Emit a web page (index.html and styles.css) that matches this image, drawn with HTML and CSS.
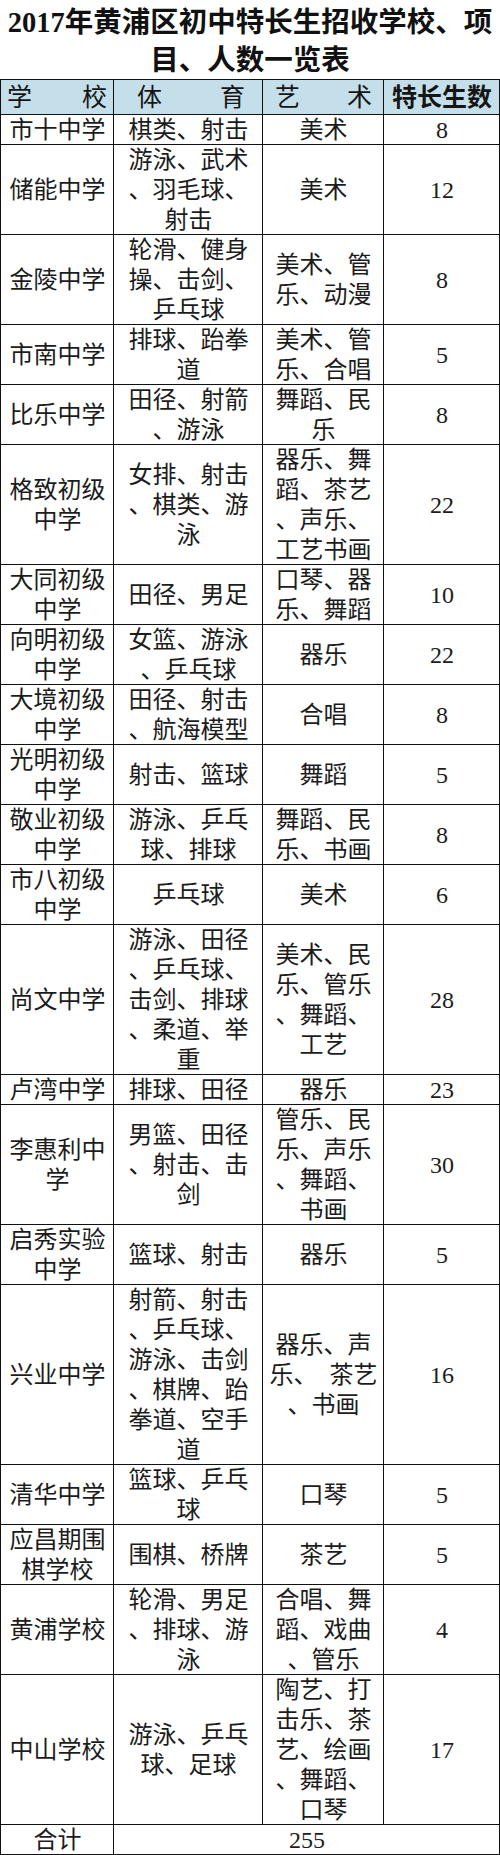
FILE: index.html
```html
<!DOCTYPE html>
<html lang="zh-CN">
<head>
<meta charset="utf-8">
<title>2017年黄浦区初中特长生招收学校、项目、人数一览表</title>
<link rel="stylesheet" href="styles.css">
</head>
<body>
<h1 class="title">2017年黄浦区初中特长生招收学校、项<br>目、人数一览表</h1>
<div class="sheet">
  <div class="cell head spread pad-school"><span>学</span><span>校</span></div>
  <div class="cell head spread pad-sport"><span>体</span><span>育</span></div>
  <div class="cell head spread pad-art"><span>艺</span><span>术</span></div>
  <div class="cell head strong">特长生数</div>

  <div class="cell">市十中学</div>
  <div class="cell">棋类、射击</div>
  <div class="cell">美术</div>
  <div class="cell">8</div>

  <div class="cell">储能中学</div>
  <div class="cell">游泳、武术<br>、羽毛球、<br>射击</div>
  <div class="cell">美术</div>
  <div class="cell">12</div>

  <div class="cell">金陵中学</div>
  <div class="cell">轮滑、健身<br>操、击剑、<br>乒乓球</div>
  <div class="cell">美术、管<br>乐、动漫</div>
  <div class="cell">8</div>

  <div class="cell">市南中学</div>
  <div class="cell">排球、跆拳<br>道</div>
  <div class="cell">美术、管<br>乐、合唱</div>
  <div class="cell">5</div>

  <div class="cell">比乐中学</div>
  <div class="cell">田径、射箭<br>、游泳</div>
  <div class="cell">舞蹈、民<br>乐</div>
  <div class="cell">8</div>

  <div class="cell">格致初级<br>中学</div>
  <div class="cell">女排、射击<br>、棋类、游<br>泳</div>
  <div class="cell">器乐、舞<br>蹈、茶艺<br>、声乐、<br>工艺书画</div>
  <div class="cell">22</div>

  <div class="cell">大同初级<br>中学</div>
  <div class="cell">田径、男足</div>
  <div class="cell">口琴、器<br>乐、舞蹈</div>
  <div class="cell">10</div>

  <div class="cell">向明初级<br>中学</div>
  <div class="cell">女篮、游泳<br>、乒乓球</div>
  <div class="cell">器乐</div>
  <div class="cell">22</div>

  <div class="cell">大境初级<br>中学</div>
  <div class="cell">田径、射击<br>、航海模型</div>
  <div class="cell">合唱</div>
  <div class="cell">8</div>

  <div class="cell">光明初级<br>中学</div>
  <div class="cell">射击、篮球</div>
  <div class="cell">舞蹈</div>
  <div class="cell">5</div>

  <div class="cell">敬业初级<br>中学</div>
  <div class="cell">游泳、乒乓<br>球、排球</div>
  <div class="cell">舞蹈、民<br>乐、书画</div>
  <div class="cell">8</div>

  <div class="cell">市八初级<br>中学</div>
  <div class="cell">乒乓球</div>
  <div class="cell">美术</div>
  <div class="cell">6</div>

  <div class="cell">尚文中学</div>
  <div class="cell">游泳、田径<br>、乒乓球、<br>击剑、排球<br>、柔道、举<br>重</div>
  <div class="cell">美术、民<br>乐、管乐<br>、舞蹈、<br>工艺</div>
  <div class="cell">28</div>

  <div class="cell">卢湾中学</div>
  <div class="cell">排球、田径</div>
  <div class="cell">器乐</div>
  <div class="cell">23</div>

  <div class="cell">李惠利中<br>学</div>
  <div class="cell">男篮、田径<br>、射击、击<br>剑</div>
  <div class="cell">管乐、民<br>乐、声乐<br>、舞蹈、<br>书画</div>
  <div class="cell">30</div>

  <div class="cell">启秀实验<br>中学</div>
  <div class="cell">篮球、射击</div>
  <div class="cell">器乐</div>
  <div class="cell">5</div>

  <div class="cell">兴业中学</div>
  <div class="cell">射箭、射击<br>、乒乓球、<br>游泳、击剑<br>、棋牌、跆<br>拳道、空手<br>道</div>
  <div class="cell">器乐、声<br>乐、&ensp;茶艺<br>、书画</div>
  <div class="cell">16</div>

  <div class="cell">清华中学</div>
  <div class="cell">篮球、乒乓<br>球</div>
  <div class="cell">口琴</div>
  <div class="cell">5</div>

  <div class="cell">应昌期围<br>棋学校</div>
  <div class="cell">围棋、桥牌</div>
  <div class="cell">茶艺</div>
  <div class="cell">5</div>

  <div class="cell">黄浦学校</div>
  <div class="cell">轮滑、男足<br>、排球、游<br>泳</div>
  <div class="cell">合唱、舞<br>蹈、戏曲<br>、管乐</div>
  <div class="cell">4</div>

  <div class="cell">中山学校</div>
  <div class="cell">游泳、乒乓<br>球、足球</div>
  <div class="cell">陶艺、打<br>击乐、茶<br>艺、绘画<br>、舞蹈、<br>口琴</div>
  <div class="cell">17</div>

  <div class="cell">合计</div>
  <div class="cell span3">255</div>
</div>
</body>
</html>
```
FILE: styles.css
```css
html, body {
  margin: 0;
  padding: 0;
  background: #ffffff;
}

body {
  width: 500px;
  font-family: "Liberation Serif", "Noto Sans CJK SC", serif;
  color: #1c1c1c;
}

.title {
  margin: 0;
  box-sizing: border-box;
  height: 79px;
  padding-top: 4px;
  font-size: 28.5px;
  line-height: 38px;
  font-weight: bold;
  text-align: center;
  white-space: nowrap;
  color: #111111;
}

.sheet {
  display: grid;
  grid-template-columns: 113px 149px 121px 116px;
  border-left: 1px solid #111111;
  border-top: 1px solid #111111;
}

.cell {
  display: flex;
  align-items: center;
  justify-content: center;
  text-align: center;
  white-space: nowrap;
  font-size: 24px;
  line-height: 30px;
  background: #ffffff;
  box-shadow: inset -1px -1px 0 #111111;
}

.head {
  background: #c5dfea;
  font-size: 25px;
  line-height: 35px;
  color: #151515;
}

.spread {
  justify-content: space-between;
}

.pad-school {
  padding: 0 7px 0 6px;
}

.pad-sport {
  padding: 0 18px 0 23px;
}

.pad-art {
  padding: 0 12px 0 12px;
}

.strong {
  font-weight: bold;
}

.span3 {
  grid-column: span 3;
}
```
